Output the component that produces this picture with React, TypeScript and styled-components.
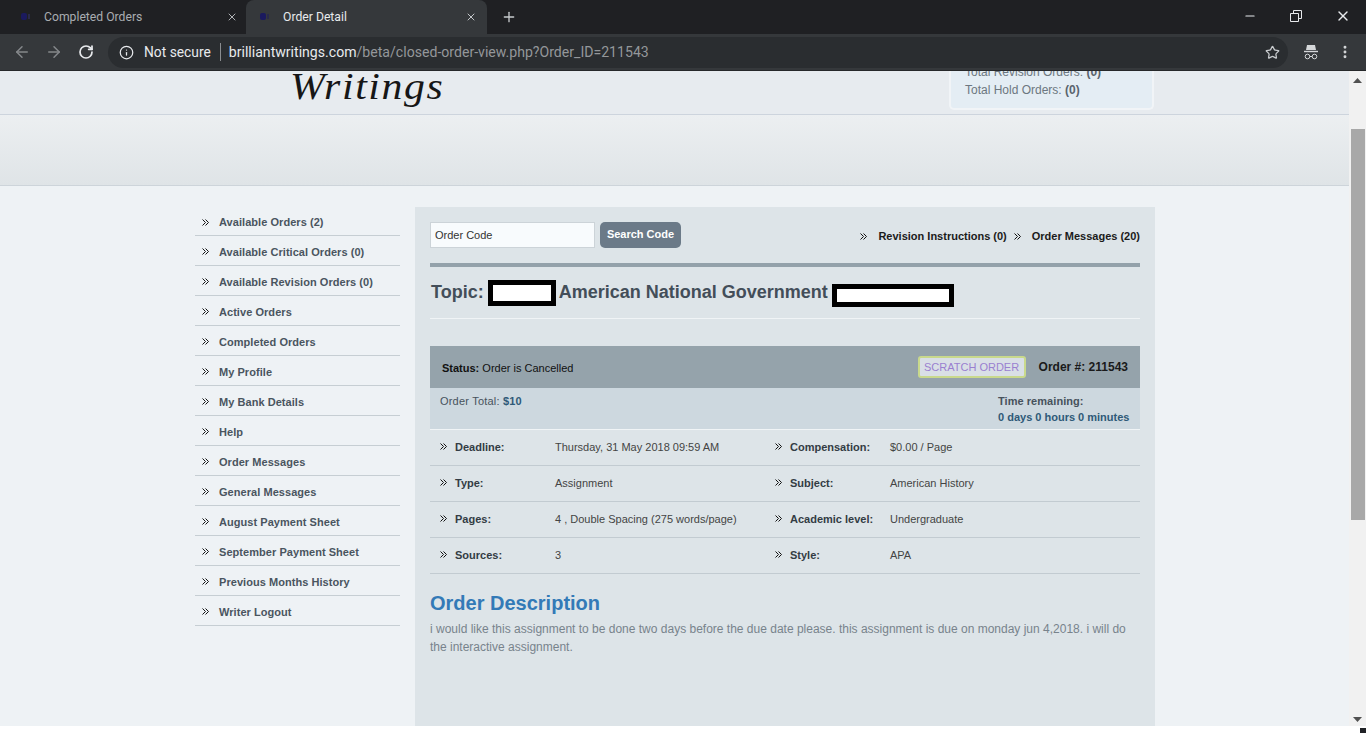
import { FC } from 'react';
import styled, { createGlobalStyle } from 'styled-components';
import {
  ArrowLeft,
  ArrowRight,
  EllipsisVertical,
  Info,
  Minus,
  Plus,
  RotateCw,
  Star,
  X,
} from 'lucide-react';

const GlobalStyle = createGlobalStyle`
  html, body {
    margin: 0;
    padding: 0;
    overflow: hidden;
    background: #fff;
  }

  * {
    box-sizing: border-box;
  }
`;

const Window = styled.div`
  width: 1366px;
  height: 733px;
  display: flex;
  flex-direction: column;
  overflow: hidden;
  font-family: 'Liberation Sans', Arial, sans-serif;
`;

/* browser chrome */

const TabStrip = styled.div`
  height: 34px;
  flex: none;
  display: flex;
  align-items: stretch;
  background: #1f2023;
  color: #fff;
`;

const Tab = styled.div<{ $active?: boolean }>`
  width: 241px;
  margin-left: ${({ $active }) => ($active ? '5px' : '0')};
  display: flex;
  align-items: center;
  padding: 0 ${({ $active }) => ($active ? '10px' : '3px')} 1px
    ${({ $active }) => ($active ? '13px' : '20px')};
  border-radius: 8px 8px 0 0;
  background: ${({ $active }) => ($active ? '#35383b' : 'transparent')};
  color: ${({ $active }) => ($active ? '#e8eaed' : '#a9adb1')};
  font-family: Roboto, sans-serif;
  font-size: 12.2px;

  svg.close {
    color: ${({ $active }) => ($active ? '#c4c7ca' : '#b0b3b6')};
  }
`;

const Favicon = styled.svg`
  width: 11px;
  height: 11px;
  margin-right: 13px;
  flex: none;
`;

const TabTitle = styled.span`
  flex: 1;
`;

const NewTab = styled.div`
  margin-left: 14px;
  display: flex;
  align-items: center;
  color: #c8cbce;
`;

const WindowControls = styled.div`
  margin-left: auto;
  display: flex;
  align-items: center;
  gap: 33px;
  padding: 0 15px 2px 0;
  color: #e8eaed;
`;

const Toolbar = styled.div`
  height: 37px;
  flex: none;
  display: flex;
  align-items: center;
  padding: 0 13px 0 13px;
  background: #35383b;
  border-bottom: 1px solid #26282a;
`;

const NavIcons = styled.div`
  display: flex;
  align-items: center;
  gap: 14px;
  color: #85888b;

  svg:last-child {
    margin-left: 1px;
    color: #e8eaed;
  }
`;

const Omnibox = styled.div`
  width: 1180px;
  height: 31px;
  margin-left: 14px;
  display: flex;
  align-items: center;
  padding: 0 8px 0 11px;
  border-radius: 16px;
  background: #2a2d30;
  font-family: Roboto, sans-serif;
  font-size: 14.1px;
  color: #e8eaed;
`;

const SecurityLabel = styled.span`
  margin-left: 10px;
  font-size: 13.8px;
`;

const Divider = styled.span`
  width: 1px;
  height: 18px;
  margin: 0 8px 0 9px;
  background: #8a8d90;
`;

const UrlHost = styled.span`
  color: #e8eaed;
`;

const UrlPath = styled.span`
  color: #94979a;
`;

const OmniboxEnd = styled.div`
  margin-left: auto;
  display: flex;
  color: #c9cccf;
`;

const ToolbarIcons = styled.div`
  margin-left: auto;
  display: flex;
  align-items: center;
  gap: 18px;
  color: #d5d7d9;
`;

/* page */

const Viewport = styled.div`
  flex: 1;
  min-height: 0;
  display: flex;
  overflow: hidden;
`;

const Page = styled.div`
  flex: 1;
  min-width: 0;
  display: flex;
  flex-direction: column;
  background: #eef2f5;
`;

const Header = styled.header`
  height: 44px;
  flex: none;
  display: flex;
  justify-content: space-between;
  padding: 0 195px 0 290px;
  overflow: hidden;
  background: #e7ebef;
  border-bottom: 1px solid #cdd4dd;
`;

const Logo = styled.div`
  height: 32px;
  font-family: 'Liberation Serif', serif;
  font-style: italic;
  font-size: 37px;
  line-height: 32px;
  letter-spacing: 1.4px;
  color: #161616;
  transform: scaleX(1.13);
  transform-origin: left center;
`;

const StatsPanel = styled.div`
  width: 205px;
  flex: none;
  align-self: flex-end;
  margin-bottom: 4px;
  padding: 0 14px 9px;
  border: 2px solid #f1f4f7;
  border-top: 0;
  border-radius: 0 0 5px 5px;
  background: #e4edf4;
  color: #6c7780;
  font-size: 12px;
  line-height: 18px;

  b {
    color: #5a646d;
  }
`;

const Band = styled.div`
  height: 71px;
  flex: none;
  background: linear-gradient(#eceff1, #dfe4e7);
  border-bottom: 1px solid #cdd4da;
`;

const Main = styled.div`
  flex: 1;
  min-height: 0;
  display: flex;
  align-items: stretch;
  gap: 15px;
  padding: 21px 0 0 195px;
`;

const Sidebar = styled.nav`
  width: 205px;
  flex: none;
`;

const SideItem = styled.div`
  height: 30px;
  display: flex;
  align-items: center;
  padding: 2px 0 0 7px;
  border-bottom: 1px solid #c6ced3;
  color: #4a555f;
  font-size: 11px;
  font-weight: bold;
  letter-spacing: 0.05px;

  &:first-child {
    height: 29px;
  }
`;

const Chevrons = styled.svg<{ $gap?: number }>`
  width: 7px;
  height: 7px;
  flex: none;
  margin-right: ${({ $gap }) => $gap ?? 11}px;
  fill: none;
  stroke: #111;
  stroke-width: 1;
`;

const Content = styled.section`
  width: 740px;
  flex: none;
  padding: 15px;
  background: #dde4e8;
`;

const SearchRow = styled.div`
  height: 26px;
  display: flex;
  align-items: center;
`;

const CodeInput = styled.input`
  width: 165px;
  height: 26px;
  padding: 0 4px;
  border: 1px solid #ccd3d8;
  background: #f8fbfd;
  color: #333;
  font-family: inherit;
  font-size: 11px;
  outline: none;

  &::placeholder {
    color: #333;
    opacity: 1;
  }
`;

const SearchButton = styled.button`
  width: 81px;
  height: 26px;
  margin-left: 5px;
  padding: 0 0 2px;
  border: 0;
  border-radius: 5px;
  background: #6b7a88;
  color: #fff;
  font-family: inherit;
  font-size: 11px;
  font-weight: bold;
`;

const OrderLinks = styled.div`
  margin-left: auto;
  padding-top: 2px;
  display: flex;
  align-items: center;
  color: #1b1b1b;
  font-size: 11px;
  font-weight: bold;
`;

const OrderLink = styled.span`
  margin-right: 7px;

  &:last-child {
    margin-right: 0;
  }
`;

const Rule = styled.div`
  height: 4px;
  margin-top: 15px;
  background: #93a1aa;
`;

const Topic = styled.h1`
  height: 52px;
  margin: 0 0 27px;
  padding-left: 1px;
  display: flex;
  align-items: flex-start;
  border-bottom: 1px solid #f0f4f6;
  color: #434e59;
  font-size: 18px;
  font-weight: bold;
  line-height: 50px;
`;

const Redaction = styled.span<{ $w: number; $h: number; $top: number; $left: number }>`
  width: ${({ $w }) => $w}px;
  height: ${({ $h }) => $h}px;
  margin: ${({ $top }) => $top}px 3px 0 ${({ $left }) => $left}px;
  border: 5px solid #000;
  background: #fff;
`;

const StatusBar = styled.div`
  height: 42px;
  display: flex;
  align-items: center;
  padding: 2px 12px 0;
  background: #95a3ab;
  color: #111;
  font-size: 12px;
`;

const StatusText = styled.span`
  font-size: 11px;
`;

const ScratchButton = styled.span`
  width: 108px;
  height: 22px;
  margin: -2px 13px 0 auto;
  display: flex;
  align-items: center;
  justify-content: center;
  border: 2px solid #c9d98c;
  border-radius: 3px;
  background: #d9dfe6;
  color: #9a7fd0;
  font-size: 11px;
`;

const OrderNumber = styled.span`
  margin-top: -2px;
  font-weight: bold;
  color: #1a1a1a;
`;

const TotalsBar = styled.div`
  height: 42px;
  display: flex;
  justify-content: space-between;
  padding: 5px 11px 0 10px;
  background: #cdd8df;
  border-bottom: 1px solid #f0f4f6;
  color: #47525c;
  font-size: 11px;
  line-height: 16px;
  letter-spacing: 0.2px;
`;

const Money = styled.b`
  color: #2f5a78;
`;

const TimeLeft = styled.div`
  width: 131px;
  white-space: nowrap;
  font-weight: bold;
  letter-spacing: 0.05px;
`;

const TimeValue = styled.div`
  color: #2f5a78;
  letter-spacing: 0;
`;

const DetailRow = styled.div`
  height: 36px;
  display: grid;
  grid-template-columns: 335px 1fr;
  border-bottom: 1px solid #c2cbd1;
`;

const DetailCell = styled.div`
  display: flex;
  align-items: center;
  padding: 0 0 2px 10px;
  color: #444;
  font-size: 11px;
`;

const DetailLabel = styled.b`
  width: 100px;
  margin-left: -3px;
  color: #333c44;
`;

const DetailValue = styled.span``;

const DescriptionTitle = styled.h2`
  margin: 18px 0 6px;
  color: #337ab7;
  font-size: 20px;
  font-weight: bold;
  line-height: 22px;
`;

const Description = styled.p`
  margin: 0;
  color: #78838c;
  font-size: 12px;
  line-height: 18px;
`;

const Scrollbar = styled.div`
  width: 17px;
  flex: none;
  display: flex;
  flex-direction: column;
  align-items: center;
  background: #f1f1f1;
`;

const ScrollArrow = styled.svg`
  width: 9px;
  height: 5px;
  flex: none;
  margin: 7px 0;
  fill: #505050;

  &:last-child {
    margin-bottom: 4px;
  }
`;

const ScrollThumb = styled.div`
  width: 14px;
  height: 391px;
  margin-top: 39px;
  margin-bottom: auto;
  background: #a8a8a8;
`;

const BottomStrip = styled.div`
  height: 7px;
  flex: none;
  display: flex;
  justify-content: flex-end;
  background: #fff;
`;

const CornerMark = styled.div`
  width: 6px;
  height: 5px;
  margin-top: 2px;
  background: #202226;
`;

const DoubleChevron: FC<{ gap?: number }> = ({ gap }) => (
  <Chevrons $gap={gap} viewBox="0 0 7 7">
    <path d="M.5.5l3 3-3 3M3.5.5l3 3-3 3" />
  </Chevrons>
);

const TabIcon: FC = () => (
  <Favicon viewBox="0 0 11 11">
    <rect x="1" y="2" width="6" height="7" rx="2" fill="#1b1a5e" />
    <rect x="8" y="3" width="2" height="5" fill="#2a2a4a" />
  </Favicon>
);

const RestoreIcon: FC = () => (
  <svg width="12" height="12" viewBox="0 0 12 12" fill="none" stroke="currentColor">
    <path d="M.5 3.5h8v8h-8zM3.5 3.5v-3h8v8h-3" />
  </svg>
);

const IncognitoIcon: FC = () => (
  <svg width="16" height="16" viewBox="0 0 16 16" fill="none" stroke="currentColor">
    <path d="M4 1h8l1 5H3z" fill="currentColor" stroke="none" />
    <path d="M1 7.5h14" strokeWidth="1.4" />
    <circle cx="4.5" cy="12.5" r="2.3" />
    <circle cx="11.5" cy="12.5" r="2.3" />
    <path d="M6.8 12.5h2.4" />
  </svg>
);

const sideItems = [
  'Available Orders (2)',
  'Available Critical Orders (0)',
  'Available Revision Orders (0)',
  'Active Orders',
  'Completed Orders',
  'My Profile',
  'My Bank Details',
  'Help',
  'Order Messages',
  'General Messages',
  'August Payment Sheet',
  'September Payment Sheet',
  'Previous Months History',
  'Writer Logout',
];

const details = [
  ['Deadline:', 'Thursday, 31 May 2018 09:59 AM', 'Compensation:', '$0.00 / Page'],
  ['Type:', 'Assignment', 'Subject:', 'American History'],
  ['Pages:', '4 , Double Spacing (275 words/page)', 'Academic level:', 'Undergraduate'],
  ['Sources:', '3', 'Style:', 'APA'],
];

const App: FC = () => (
  <Window>
    <GlobalStyle />

    <TabStrip>
      <Tab>
        <TabIcon />
        <TabTitle>Completed Orders</TabTitle>
        <X className="close" size={12} />
      </Tab>
      <Tab $active>
        <TabIcon />
        <TabTitle>Order Detail</TabTitle>
        <X className="close" size={12} />
      </Tab>
      <NewTab>
        <Plus size={16} />
      </NewTab>
      <WindowControls>
        <Minus size={14} />
        <RestoreIcon />
        <X size={16} />
      </WindowControls>
    </TabStrip>

    <Toolbar>
      <NavIcons>
        <ArrowLeft size={18} />
        <ArrowRight size={18} />
        <RotateCw size={16} strokeWidth={2.6} />
      </NavIcons>
      <Omnibox>
        <Info size={15} />
        <SecurityLabel>Not secure</SecurityLabel>
        <Divider />
        <UrlHost>brilliantwritings.com</UrlHost>
        <UrlPath>/beta/closed-order-view.php?Order_ID=211543</UrlPath>
        <OmniboxEnd>
          <Star size={15} />
        </OmniboxEnd>
      </Omnibox>
      <ToolbarIcons>
        <IncognitoIcon />
        <EllipsisVertical size={16} strokeWidth={2.4} />
      </ToolbarIcons>
    </Toolbar>

    <Viewport>
      <Page>
        <Header>
          <Logo>Writings</Logo>
          <StatsPanel>
            Total Revision Orders: <b>(0)</b>
            <br />
            Total Hold Orders: <b>(0)</b>
          </StatsPanel>
        </Header>
        <Band />
        <Main>
          <Sidebar>
            {sideItems.map((item) => (
              <SideItem key={item}>
                <DoubleChevron gap={10} />
                {item}
              </SideItem>
            ))}
          </Sidebar>

          <Content>
            <SearchRow>
              <CodeInput placeholder="Order Code" />
              <SearchButton>Search Code</SearchButton>
              <OrderLinks>
                <DoubleChevron />
                <OrderLink>Revision Instructions (0)</OrderLink>
                <DoubleChevron />
                <OrderLink>Order Messages (20)</OrderLink>
              </OrderLinks>
            </SearchRow>

            <Rule />

            <Topic>
              Topic:
              <Redaction $w={68} $h={26} $top={13} $left={4} />
              American National Government
              <Redaction $w={122} $h={23} $top={17} $left={4} />
            </Topic>

            <StatusBar>
              <StatusText>
                <b>Status:</b> Order is Cancelled
              </StatusText>
              <ScratchButton>SCRATCH ORDER</ScratchButton>
              <OrderNumber>Order #: 211543</OrderNumber>
            </StatusBar>

            <TotalsBar>
              <div>
                Order Total: <Money>$10</Money>
              </div>
              <TimeLeft>
                Time remaining:
                <TimeValue>0 days 0 hours 0 minutes</TimeValue>
              </TimeLeft>
            </TotalsBar>

            {details.map(([leftLabel, leftValue, rightLabel, rightValue]) => (
              <DetailRow key={leftLabel}>
                <DetailCell>
                  <DoubleChevron />
                  <DetailLabel>{leftLabel}</DetailLabel>
                  <DetailValue>{leftValue}</DetailValue>
                </DetailCell>
                <DetailCell>
                  <DoubleChevron />
                  <DetailLabel>{rightLabel}</DetailLabel>
                  <DetailValue>{rightValue}</DetailValue>
                </DetailCell>
              </DetailRow>
            ))}

            <DescriptionTitle>Order Description</DescriptionTitle>
            <Description>
              i would like this assignment to be done two days before the due
              date please. this assignment is due on monday jun 4,2018. i will
              do the interactive assignment.
            </Description>
          </Content>
        </Main>
      </Page>

      <Scrollbar>
        <ScrollArrow viewBox="0 0 9 5">
          <path d="M4.5 0L9 5H0z" />
        </ScrollArrow>
        <ScrollThumb />
        <ScrollArrow viewBox="0 0 9 5">
          <path d="M0 0h9L4.5 5z" />
        </ScrollArrow>
      </Scrollbar>
    </Viewport>

    <BottomStrip>
      <CornerMark />
    </BottomStrip>
  </Window>
);

export default App;
